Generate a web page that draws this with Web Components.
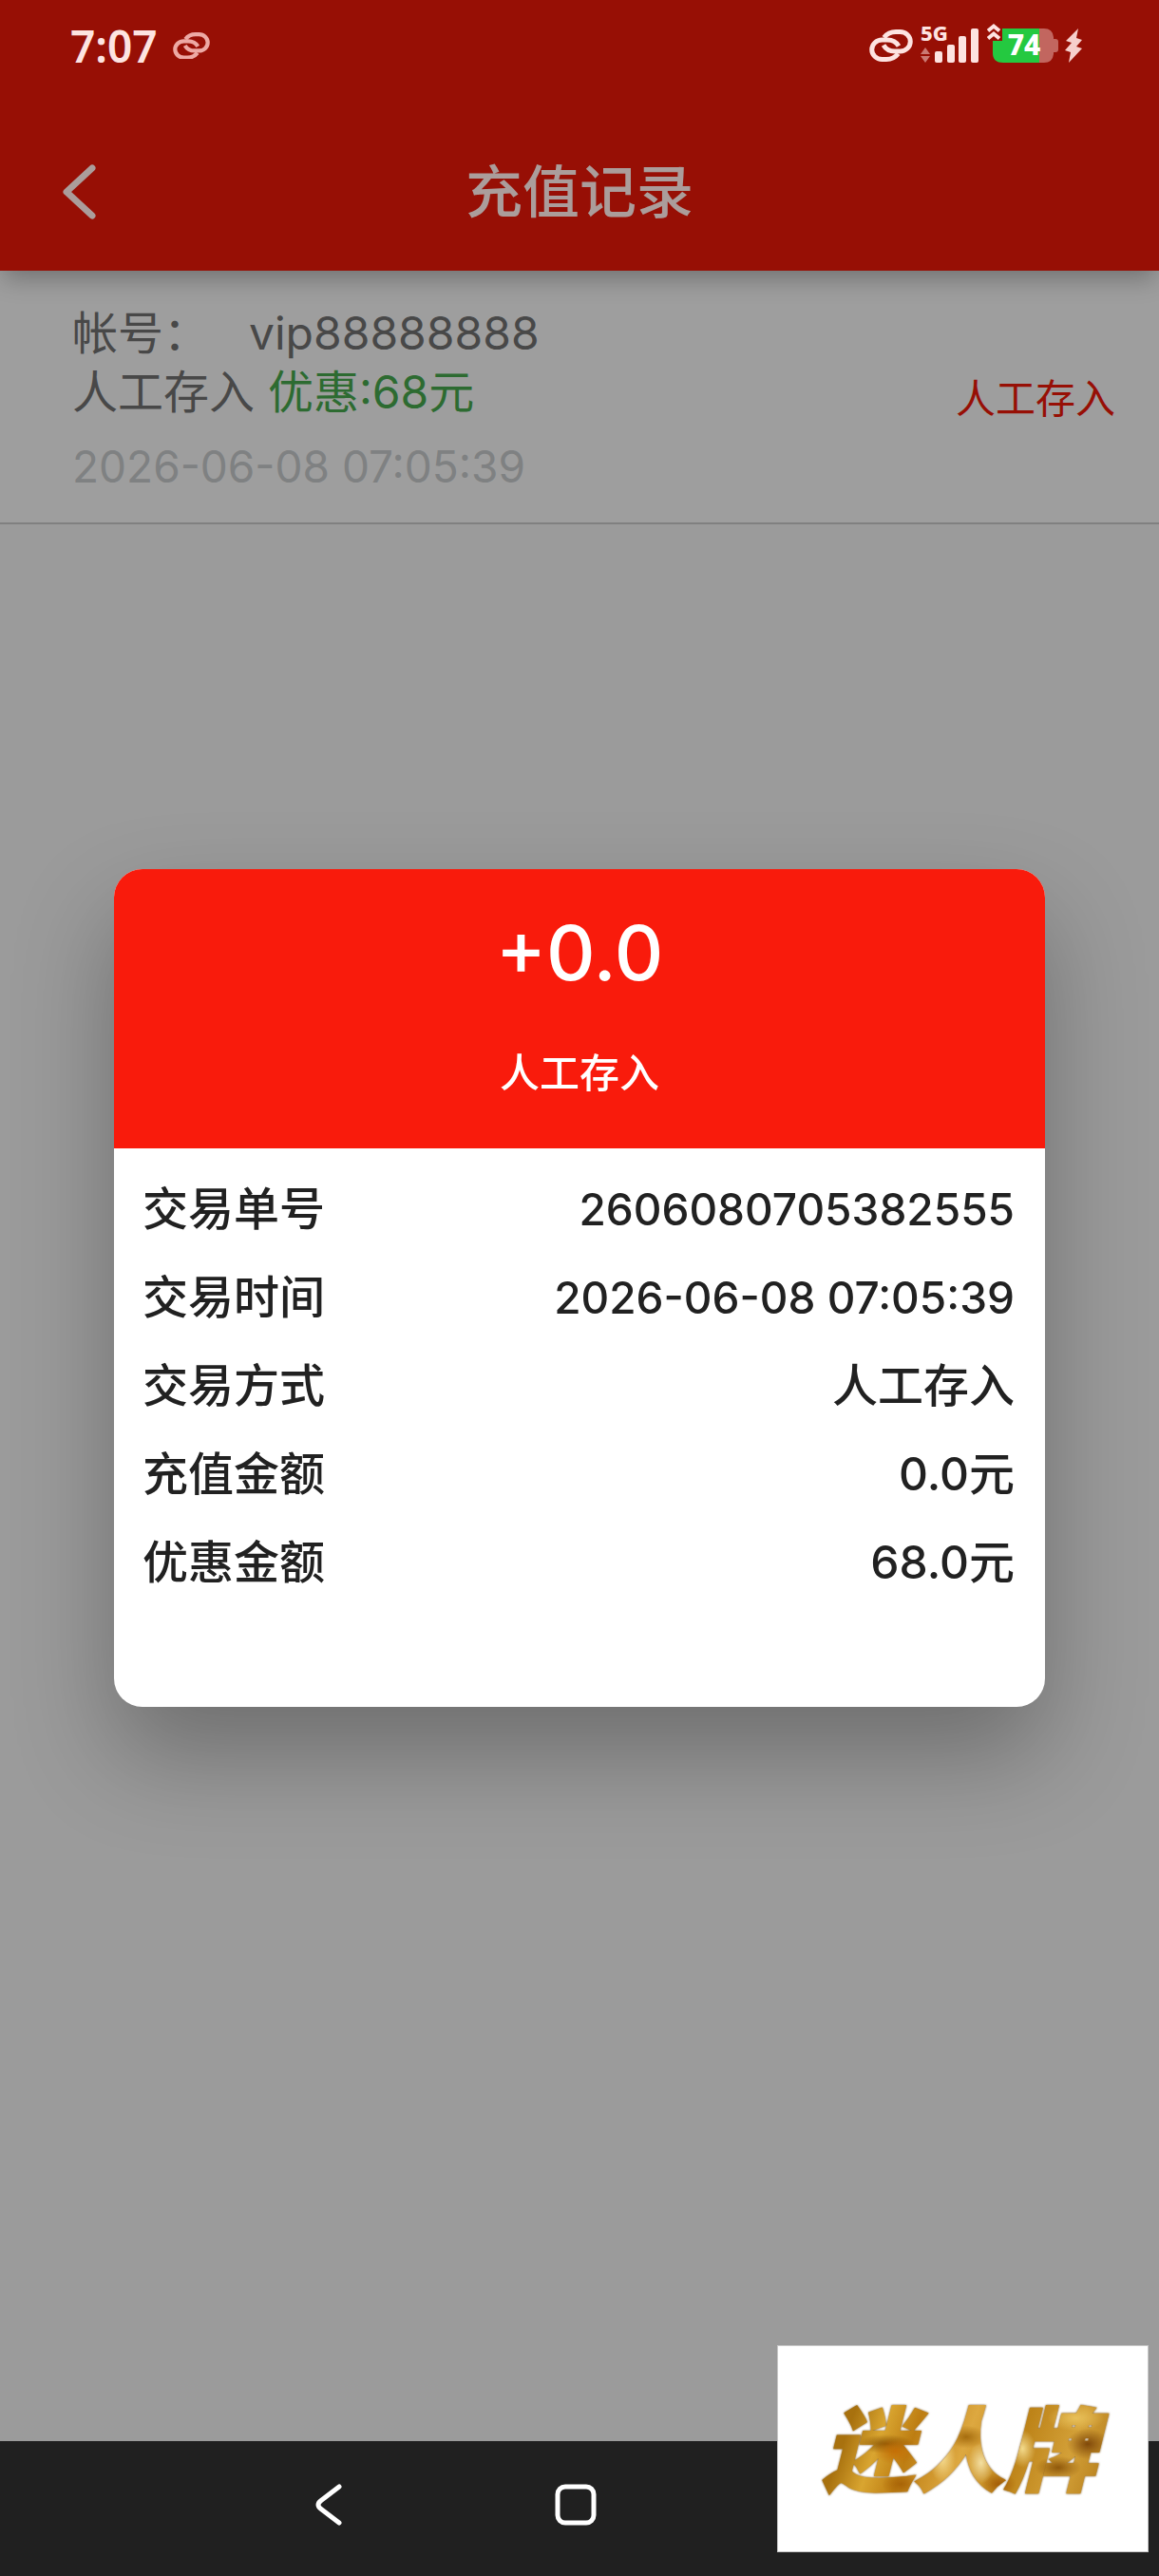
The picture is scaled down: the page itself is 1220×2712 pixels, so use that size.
<!DOCTYPE html>
<html lang="zh-CN">
<head>
<meta charset="utf-8">
<meta name="viewport" content="width=device-width, initial-scale=1">
<title>充值记录</title>
<style>
  :root {
    --brand: #f91b0c;
    --brand-dim: #970f05;
    --page: #9b9b9b;
    --surface-dim: #9e9e9e;
    --ink: #212121;
    --ink-dim: #484848;
    --muted-dim: #7f8182;
    --line-dim: #808080;
    --promo-dim: #2d6b31;
    --text-md: 48px;
    --text-num: 46px;
    --text-sm: 42px;
  }
  body {
    margin: 0;
    min-height: 100vh;
    display: flex;
    flex-direction: column;
    background: var(--page);
    font-family: Inter, "Noto Sans CJK SC", sans-serif;
    font-size: var(--text-md);
  }
  main { flex: 1; }
  .num { font-size: var(--text-num); }
</style>
</head>
<body>
<app-header>
  <status-bar slot="status" time="7:07" network="5G" battery="74"></status-bar>
  充值记录
</app-header>
<main>
  <record-item>
    <span slot="label">帐号：</span>
    <span slot="account">vip88888888</span>
    <span slot="type">人工存入</span>
    <span slot="promo">优惠:68元</span>
    <time slot="time" class="num">2026-06-08 07:05:39</time>
    <span slot="status">人工存入</span>
  </record-item>
</main>
<nav-bar></nav-bar>
<detail-dialog>
  <span slot="amount">+0.0</span>
  <span slot="caption">人工存入</span>
  <detail-row label="交易单号"><span class="num">2606080705382555</span></detail-row>
  <detail-row label="交易时间"><time class="num">2026-06-08 07:05:39</time></detail-row>
  <detail-row label="交易方式">人工存入</detail-row>
  <detail-row label="充值金额">0.0元</detail-row>
  <detail-row label="优惠金额">68.0元</detail-row>
</detail-dialog>
<brand-mark>迷人牌</brand-mark>

<script>
  class BaseElement extends HTMLElement {
    connectedCallback() {
      if (!this.shadowRoot) this.attachShadow({ mode: 'open' }).innerHTML = this.render();
    }
  }

  const linkIcon = (width) => `
    <svg width="${width}" viewBox="0 0 46 34" fill="none" stroke="currentColor" stroke-width="5" aria-hidden="true">
      <path d="M15.500 8.500C19 4 23 2.500 28 2.500H32.500A10.500 10 0 0 1 32.500 23H27C21 23 17 20 15 16.500"/>
      <path d="M30.500 25.500C27 30 23 31.500 18 31.500H13.500A10.500 10 0 0 1 13.500 11H19C25 11 29 14 31 17.500"/>
    </svg>`;

  customElements.define('status-bar', class extends BaseElement {
    render() {
      return `
        <style>
          :host { display: flex; justify-content: space-between; align-items: center; height: 96px; padding: 0 80px 0 74px; box-sizing: border-box; color: #fde3e1; font-family: "Noto Sans", sans-serif; }
          .side { display: flex; align-items: center; }
          .left { gap: 16px; }
          .left svg { color: #eda9a4; }
          .time { font-size: 46px; font-weight: 600; line-height: 56px; }
          .right { gap: 8px; }
          .signal { display: flex; align-items: flex-start; position: relative; height: 48px; }
          .net { position: absolute; left: 0; top: 0; font-size: 22px; line-height: 20px; font-weight: 800; }
          .battery { position: relative; display: flex; align-items: flex-start; height: 48px; margin-right: -2px; }
          .level { position: absolute; left: 4px; top: 5px; width: 70px; line-height: 36px; text-align: center; font-size: 30px; font-weight: 800; color: #fff; }
        </style>
        <div class="side left"><span class="time">${this.getAttribute('time')}</span>${linkIcon(39)}</div>
        <div class="side right">
          ${linkIcon(46)}
          <div class="signal">
            <span class="net">${this.getAttribute('network')}</span>
            <svg width="62" height="42" viewBox="0 0 62 42" fill="currentColor" aria-hidden="true">
              <path d="M5 26l5 7H0zM5 42l-5-7h10z" opacity=".5"/>
              <rect x="15" y="30" width="8" height="12" rx="2"/><rect x="28" y="23" width="8" height="19" rx="2"/>
              <rect x="40" y="14" width="8" height="28" rx="2"/><rect x="53" y="6" width="8" height="36" rx="2"/>
            </svg>
          </div>
          <div class="battery">
            <svg width="76" height="42" viewBox="0 0 76 42" aria-hidden="true">
              <path d="M57 6H60Q69 6 70 15V17H72Q75 17 75 20V28Q75 31 72 31H70V33Q69 42 60 42H57Z" fill="#c2665f"/>
              <path d="M16 6H55V42H17Q6 42 6 32V19H16Z" fill="#24c940"/>
              <path d="M55 6H58V42H55Z" fill="#c2665f"/>
              <path d="M1 8.500L7 3.500L13 8.500M1 16.500L7 11.500L13 16.500" fill="none" stroke="#fde3e1" stroke-width="4"/>
            </svg>
            <span class="level">${this.getAttribute('battery')}</span>
          </div>
          <svg width="19" height="36" viewBox="0 0 19 36" fill="#f6cfcc" aria-hidden="true"><path d="M14 0L1 13L7 15L0 23L6 25L4 36L18 21L12 19L18 12L12 10Z"/></svg>
        </div>`;
    }
  });

  customElements.define('app-header', class extends BaseElement {
    render() {
      return `
        <style>
          :host { display: block; position: relative; background: var(--brand-dim); color: #ab9d9b; box-shadow: 0 12px 24px -4px rgba(0,0,0,.28); }
          .bar { display: grid; grid-template-columns: 170px 1fr 170px; align-items: center; height: 189px; padding-top: 22px; box-sizing: border-box; }
          button { display: flex; align-items: center; width: 170px; height: 120px; padding: 0 0 0 65px; border: 0; background: none; color: inherit; }
          h1 { margin: 0; font-size: 60px; line-height: 80px; font-weight: 500; text-align: center; }
        </style>
        <slot name="status"></slot>
        <div class="bar">
          <button type="button" aria-label="返回">
            <svg width="38" height="60" viewBox="0 0 38 60" fill="none" stroke="currentColor" stroke-width="7" stroke-linecap="round" stroke-linejoin="round"><path d="M32 5L5 30L32 55"/></svg>
          </button>
          <h1><slot></slot></h1>
        </div>`;
    }
  });

  customElements.define('record-item', class extends BaseElement {
    render() {
      return `
        <style>
          :host { display: flex; justify-content: space-between; align-items: center; padding: 35px 46px 31px 76px; background: var(--surface-dim); border-bottom: 2px solid var(--line-dim); color: var(--ink-dim); }
          .info { display: flex; flex-direction: column; }
          .line { display: flex; line-height: 62px; }
          .account { gap: 42px; }
          .type { gap: 14px; }
          .promo { color: var(--promo-dim); }
          .time { margin-top: 19px; line-height: 56px; color: var(--muted-dim); }
          .time slot { display: flex; }
          .status { font-size: var(--text-sm); line-height: 56px; color: var(--brand-dim); }
        </style>
        <div class="info">
          <div class="line account"><slot name="label"></slot><slot name="account"></slot></div>
          <div class="line type"><slot name="type"></slot><span class="promo"><slot name="promo"></slot></span></div>
          <div class="time"><slot name="time"></slot></div>
        </div>
        <div class="status"><slot name="status"></slot></div>`;
    }
  });

  customElements.define('detail-row', class extends BaseElement {
    render() {
      return `
        <style>
          :host { display: flex; justify-content: space-between; height: 93px; line-height: 93px; }
        </style>
        <span>${this.getAttribute('label')}</span><span><slot></slot></span>`;
    }
  });

  customElements.define('detail-dialog', class extends BaseElement {
    render() {
      return `
        <style>
          :host { position: fixed; inset: 0; display: flex; align-items: center; justify-content: center; padding: 0 120px; }
          section { flex: 1; overflow: hidden; border-radius: 30px; background: #fff; color: var(--ink); font-weight: 500;
            box-shadow: 0 50px 105px rgba(0,0,0,.29); }
          header { display: flex; flex-direction: column; align-items: center; gap: 30px; padding: 32px 0 38px; background: var(--brand); color: #fff; }
          .amount { font-size: 80px; line-height: 112px; }
          .caption { font-size: var(--text-sm); line-height: 82px; }
          .rows { padding: 17px 32px 106px 30px; }
        </style>
        <section role="dialog" aria-label="交易详情">
          <header>
            <div class="amount"><slot name="amount"></slot></div>
            <div class="caption"><slot name="caption"></slot></div>
          </header>
          <div class="rows"><slot></slot></div>
        </section>`;
    }
  });

  customElements.define('nav-bar', class extends BaseElement {
    render() {
      return `
        <style>
          :host { display: grid; grid-template-columns: repeat(3, 260px); justify-content: center; height: 142px; padding: 0 8px 8px 0; box-sizing: border-box; background: #202020; color: #fff; }
          button { display: flex; align-items: center; justify-content: center; border: 0; padding: 0; background: none; color: inherit; }
        </style>
        <button type="button" aria-label="返回">
          <svg width="28" height="44" viewBox="0 0 28 44" fill="none" stroke="currentColor" stroke-width="5" stroke-linecap="round"><path d="M25 3L6 17.500Q0 22 6 26.500L25 41"/></svg>
        </button>
        <button type="button" aria-label="主页">
          <svg width="44" height="44" viewBox="0 0 44 44" fill="none" stroke="currentColor" stroke-width="5"><rect x="3" y="3" width="38" height="38" rx="8"/></svg>
        </button>`;
    }
  });

  customElements.define('brand-mark', class extends BaseElement {
    render() {
      return `
        <style>
          :host { position: fixed; right: 11px; bottom: 25px; display: flex; align-items: center; justify-content: center; width: 391px; height: 218px; box-sizing: border-box; border: 1px solid #c8c8c8; background: #fff; }
          span { padding: 4px 16px 0 8px; font-size: 96px; line-height: 120px; font-weight: 900; font-style: italic; color: transparent; -webkit-text-stroke: 2px transparent;
            filter: drop-shadow(0 0 1px #7a5010);
            background:
              radial-gradient(ellipse 22px 14px at 27% 52%, #c46f06, transparent),
              radial-gradient(ellipse 30px 10px at 24% 46%, #8a5606, transparent),
              radial-gradient(ellipse 20px 12px at 29% 80%, #a86408, transparent),
              radial-gradient(ellipse 14px 26px at 43% 58%, #f5dc92, transparent),
              radial-gradient(ellipse 20px 12px at 51% 40%, #a56c0e, transparent),
              radial-gradient(ellipse 14px 22px at 56% 62%, #f3dfa2, transparent),
              radial-gradient(ellipse 18px 12px at 62% 80%, #a45d08, transparent),
              radial-gradient(ellipse 14px 20px at 70% 50%, #f3da8c, transparent),
              radial-gradient(ellipse 22px 16px at 92% 46%, #80490a, transparent),
              radial-gradient(ellipse 24px 12px at 82% 66%, #8f580b, transparent),
              radial-gradient(ellipse 30px 14px at 88% 24%, #e8c05a, transparent),
              linear-gradient(110deg, #a8710e 0 14%, #d9a530 24%, #bd7d12 34%, #dda840 50%, #bd8318 66%, #d3a038 82%, #ac7312);
            -webkit-background-clip: text; background-clip: text; }
        </style>
        <span><slot></slot></span>`;
    }
  });
</script>
</body>
</html>
